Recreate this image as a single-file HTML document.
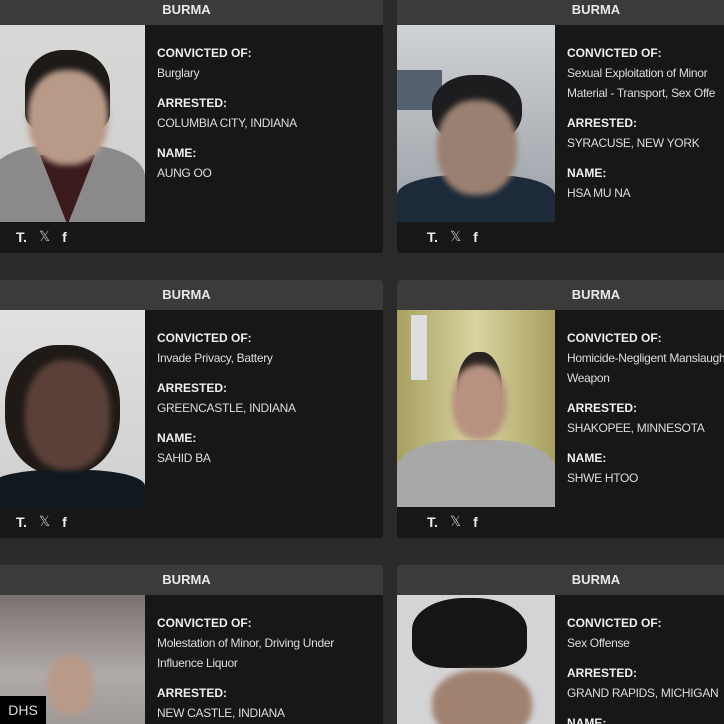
<!DOCTYPE html>
<html><head><meta charset="utf-8"><style>
*{margin:0;padding:0;box-sizing:border-box}
html,body{width:724px;height:724px;overflow:hidden}
body{background:#2a2a2a;font-family:"Liberation Sans",sans-serif;position:relative}
.card{position:absolute;height:258px;background:#171717;border-radius:3px;overflow:hidden}
.hd{height:30px;background:#3b3b3c;color:#e8e8e8;font-weight:bold;font-size:13px;text-align:center;line-height:30px}
.ph{position:absolute;top:30px;height:197px;overflow:hidden}
.tx{position:absolute;top:48px;color:#ddd;font-size:12px;line-height:20px;white-space:nowrap;letter-spacing:-.3px}
.tx b{display:block;color:#f0f0f0;font-size:12px;letter-spacing:0}
.tx .g{height:10px}
.ic{position:absolute;top:233px;color:#eee;font-size:14px;font-weight:bold;display:flex;gap:12px;align-items:center}
.face{position:absolute;border-radius:45%;filter:blur(3px)}
</style></head><body>

<div class="card" style="left:-10px;top:-5px;width:393px">
 <div class="hd">BURMA</div>
 <div class="ph" style="left:0;width:155px;background:linear-gradient(#d8d8d6,#cfcfcd)">
  <div style="position:absolute;left:35px;top:25px;width:85px;height:80px;background:#1d1a18;border-radius:45% 45% 20% 20%"></div>
  <div style="position:absolute;left:0;top:120px;width:155px;height:80px;background:#8a8a8a;border-radius:40% 40% 0 0"></div>
  <div style="position:absolute;left:50px;top:130px;width:55px;height:70px;background:#3a1a1c;clip-path:polygon(0 0,100% 0,50% 100%)"></div>
  <div class="face" style="left:38px;top:45px;width:80px;height:95px;background:#b89a88"></div>
 </div>
 <div class="tx" style="left:167px"><b>CONVICTED OF:</b>Burglary<div class="g"></div><b>ARRESTED:</b>COLUMBIA CITY, INDIANA<div class="g"></div><b>NAME:</b>AUNG OO</div>
 <div class="ic" style="left:26px"><span>T.</span><span style="font-weight:normal;color:#bbb">𝕏</span><span>f</span></div>
</div>

<div class="card" style="left:397px;top:-5px;width:340px">
 <div class="hd" style="padding-left:58px">BURMA</div>
 <div class="ph" style="left:0;width:158px;background:linear-gradient(#cfd2d6,#9aa0a6)">
  <div style="position:absolute;left:0;top:45px;width:45px;height:40px;background:#556070"></div>
  <div style="position:absolute;left:35px;top:50px;width:90px;height:70px;background:#1d1d1f;border-radius:45%"></div>
  <div style="position:absolute;left:0;top:150px;width:158px;height:50px;background:#1c2a3a;border-radius:40% 40% 0 0"></div>
  <div class="face" style="left:40px;top:75px;width:80px;height:95px;background:#9a8070"></div>
 </div>
 <div class="tx" style="left:170px"><b>CONVICTED OF:</b>Sexual Exploitation of Minor<br>Material - Transport, Sex Offe<div class="g"></div><b>ARRESTED:</b>SYRACUSE, NEW YORK<div class="g"></div><b>NAME:</b>HSA MU NA</div>
 <div class="ic" style="left:30px"><span>T.</span><span style="font-weight:normal;color:#bbb">𝕏</span><span>f</span></div>
</div>

<div class="card" style="left:-10px;top:280px;width:393px">
 <div class="hd">BURMA</div>
 <div class="ph" style="left:0;width:155px;background:linear-gradient(#e0e0e0,#cfcfcf)">
  <div style="position:absolute;left:15px;top:35px;width:115px;height:130px;background:#201a16;border-radius:45%"></div>
  <div style="position:absolute;left:0;top:160px;width:155px;height:40px;background:#101820;border-radius:40% 40% 0 0"></div>
  <div class="face" style="left:35px;top:50px;width:85px;height:110px;background:#5a4038"></div>
 </div>
 <div class="tx" style="left:167px"><b>CONVICTED OF:</b>Invade Privacy, Battery<div class="g"></div><b>ARRESTED:</b>GREENCASTLE, INDIANA<div class="g"></div><b>NAME:</b>SAHID BA</div>
 <div class="ic" style="left:26px"><span>T.</span><span style="font-weight:normal;color:#bbb">𝕏</span><span>f</span></div>
</div>

<div class="card" style="left:397px;top:280px;width:340px">
 <div class="hd" style="padding-left:58px">BURMA</div>
 <div class="ph" style="left:0;width:158px;background:linear-gradient(90deg,#a8a060,#d8d4a0 50%,#a8a060)">
  <div style="position:absolute;left:14px;top:5px;width:16px;height:65px;background:#ddd"></div>
  <div style="position:absolute;left:0;top:130px;width:158px;height:70px;background:#a8a8a8;border-radius:40% 40% 0 0"></div>
  <div style="position:absolute;left:60px;top:42px;width:45px;height:80px;background:#2a2420;border-radius:45%"></div>
  <div class="face" style="left:55px;top:55px;width:55px;height:75px;background:#b89280"></div>
 </div>
 <div class="tx" style="left:170px"><b>CONVICTED OF:</b>Homicide-Negligent Manslaughter<br>Weapon<div class="g"></div><b>ARRESTED:</b>SHAKOPEE, MINNESOTA<div class="g"></div><b>NAME:</b>SHWE HTOO</div>
 <div class="ic" style="left:30px"><span>T.</span><span style="font-weight:normal;color:#bbb">𝕏</span><span>f</span></div>
</div>

<div class="card" style="left:-10px;top:565px;width:393px">
 <div class="hd">BURMA</div>
 <div class="ph" style="left:0;width:155px;background:linear-gradient(#7a7270,#b0aaa8 40%,#8a8480)">
  <div class="face" style="left:58px;top:60px;width:45px;height:60px;background:#b89a88"></div>
 </div>
 <div class="tx" style="left:167px"><b>CONVICTED OF:</b>Molestation of Minor, Driving Under<br>Influence Liquor<div class="g"></div><b>ARRESTED:</b>NEW CASTLE, INDIANA<div class="g"></div><b>NAME:</b>X</div>
</div>

<div class="card" style="left:397px;top:565px;width:340px">
 <div class="hd" style="padding-left:58px">BURMA</div>
 <div class="ph" style="left:0;width:158px;background:#d4d4d6">
  <div style="position:absolute;left:15px;top:3px;width:115px;height:70px;background:#151515;border-radius:45% 45% 30% 30%"></div>
  <div class="face" style="left:35px;top:75px;width:100px;height:70px;background:#a08270"></div>
 </div>
 <div class="tx" style="left:170px"><b>CONVICTED OF:</b>Sex Offense<div class="g"></div><b>ARRESTED:</b>GRAND RAPIDS, MICHIGAN<div class="g"></div><b>NAME:</b>X</div>
</div>

<div style="position:absolute;left:0;top:696px;width:46px;height:28px;background:#000;color:#ddd;font-size:14px;line-height:28px;text-align:center">DHS</div>
</body></html>
